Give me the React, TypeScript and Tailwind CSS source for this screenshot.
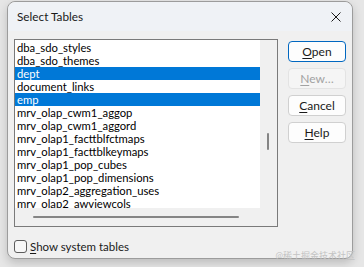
import React from 'react';

const tables = [
  'dba_sdo_styles',
  'dba_sdo_themes',
  'dept',
  'document_links',
  'emp',
  'mrv_olap_cwm1_aggop',
  'mrv_olap_cwm1_aggord',
  'mrv_olap1_facttblfctmaps',
  'mrv_olap1_facttblkeymaps',
  'mrv_olap1_pop_cubes',
  'mrv_olap1_pop_dimensions',
  'mrv_olap2_aggregation_uses',
  'mrv_olap2_awviewcols',
];

const selected = ['dept', 'emp'];

interface DlgButtonProps {
  label: string;
  hotkey: number;
  primary?: boolean;
  disabled?: boolean;
}

const DlgButton: React.FC<DlgButtonProps> = ({ label, hotkey, primary, disabled }) => {
  const before = label.slice(0, hotkey);
  const key = label.charAt(hotkey);
  const after = label.slice(hotkey + 1);
  return (
    <div
      className={
        'h-[21px] w-[58px] rounded-[4px] border flex items-center justify-center text-[12px] leading-none ' +
        (primary
          ? 'border-[#0067c0] bg-[#fdfdfd] text-[#1a1a1a]'
          : disabled
          ? 'border-[#e3e3e3] bg-[#f5f5f5] text-[#a2a2a2]'
          : 'border-[#d0d0d0] bg-[#fdfdfd] text-[#1a1a1a]')
      }
    >
      <span>
        {before}
        <span className="underline underline-offset-2">{key}</span>
        {after}
      </span>
    </div>
  );
};

export default function App() {
  return (
    <div
      className="w-[364px] h-[267px] bg-[#e6e6e6] pl-[7px] pt-[1px] overflow-hidden"
      style={{ fontFamily: 'Lato, "Noto Sans CJK SC", sans-serif' }}
    >
      <div className="w-[346px] h-[258px] rounded-[8px] border border-[#9c9c9c] bg-[#f0f0f0] flex flex-col shadow-[0_4px_10px_rgba(0,0,0,0.18)] relative">
        {/* Title bar */}
        <div className="h-[29px] flex items-center justify-between pl-[9px] pr-[7px] rounded-t-[8px] bg-[#eff2f6]">
          <span className="text-[11.75px] text-[#1a1a1a]">Select Tables</span>
          <svg width="10" height="10" viewBox="0 0 10 10" className="mr-[4px]">
            <path d="M0.5 0.5 L9.5 9.5 M9.5 0.5 L0.5 9.5" stroke="#1a1a1a" strokeWidth="1" />
          </svg>
        </div>

        {/* Body */}
        <div className="flex gap-[10px] pl-[6px] pr-[6px] pt-[8px]">
          {/* List box */}
          <div className="w-[264px] h-[188px] border border-[#7a7a7a] bg-white flex flex-col">
            <div className="flex flex-1 min-h-0">
              <div className="flex-1 pt-[1px] overflow-hidden">
                {tables.map((t) => {
                  const on = selected.includes(t);
                  return (
                    <div
                      key={t}
                      className={
                        'h-[13px] pl-[2px] text-[11.25px] leading-[13px] whitespace-nowrap overflow-hidden ' +
                        (on ? 'bg-[#0078d7] text-white' : 'text-[#000]')
                      }
                    >
                      {t}
                    </div>
                  );
                })}
              </div>
              {/* Vertical scrollbar */}
              <div className="w-[17px] bg-[#f0f0f0] relative">
                <div className="absolute left-[7px] top-[93px] w-[2px] h-[17px] bg-[#858585] rounded-full" />
              </div>
            </div>
            {/* Horizontal scrollbar */}
            <div className="h-[18px] flex">
              <div className="flex-1 bg-[#f0f0f0] flex items-center pl-[18px] pr-[20px]">
                <div className="h-[2px] w-[206px] bg-[#858585] rounded-full" />
              </div>
              <div className="w-[17px] bg-[#f0f0f0]" />
            </div>
          </div>

          {/* Buttons */}
          <div className="flex flex-col gap-[6px] pt-[2px]">
            <DlgButton label="Open" hotkey={0} primary />
            <DlgButton label="New…" hotkey={0} disabled />
            <DlgButton label="Cancel" hotkey={0} />
            <DlgButton label="Help" hotkey={0} />
          </div>
        </div>

        {/* Checkbox */}
        <div className="flex items-center gap-[3px] pl-[6px] mt-[13px]">
          <div className="w-[13px] h-[13px] rounded-[3px] border border-[#5c5c5c] bg-[#f7f7f7]" />
          <span className="text-[11.5px] text-[#1a1a1a] leading-none">
            <span className="underline underline-offset-2">S</span>how system tables
          </span>
        </div>

        {/* Watermark */}
        <div className="absolute right-[-3px] bottom-[-2px] text-[9px] text-[#c4c4c4] leading-none">
          @稀土掘金技术社区
        </div>
      </div>
    </div>
  );
}
